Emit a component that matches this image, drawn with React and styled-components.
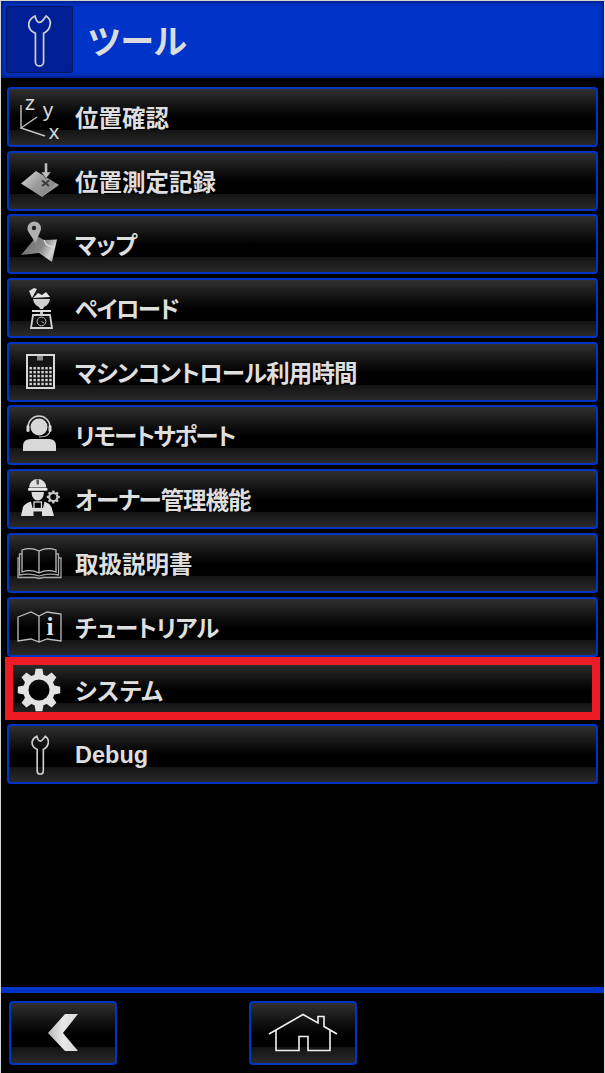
import styled, { createGlobalStyle } from 'styled-components'

const GlobalStyle = createGlobalStyle`
  html, body {
    margin: 0;
    padding: 0;
    background: #d4d4d4;
  }
`;

const gearPath = (cx, cy, outer, inner, hole, teeth) => {
  let d = '';
  const step = (Math.PI * 2) / teeth;
  for (let i = 0; i < teeth; i++) {
    const a = i * step - Math.PI / 2;
    const pts = [
      [inner, a - step * 0.36],
      [outer, a - step * 0.2],
      [outer, a + step * 0.2],
      [inner, a + step * 0.36],
    ];
    pts.forEach(([r, t], j) => {
      const x = (cx + r * Math.cos(t)).toFixed(2);
      const y = (cy + r * Math.sin(t)).toFixed(2);
      d += `${i === 0 && j === 0 ? 'M' : 'L'}${x} ${y} `;
    });
  }
  d += `Z M${cx + hole} ${cy} A${hole} ${hole} 0 1 0 ${cx - hole} ${cy} A${hole} ${hole} 0 1 0 ${cx + hole} ${cy} Z`;
  return d;
};

const WRENCH = 'M8 49 V21 C3.5 19 1 15 1.5 11 C2 8 4 6 7.5 4 L9 8 Q12 12.5 15.5 8 L18.5 4 C21.5 6 23 9 22.5 12 C22 16 19.5 19.5 16 21 V49 A4 4 0 0 1 8 49 Z';

const Svg = ({ children }) => (
  <svg width="54" height="54" viewBox="0 0 54 54">{children}</svg>
);

const AxesIcon = () => (
  <Svg>
    <path d="M8 15 V38 L24 27 M8 38 L32 46" fill="none" stroke="#c4c4c4" strokeWidth="1.4" />
    <g fill="#d8d8d8" fontFamily="Liberation Sans, sans-serif" fontSize="21" textAnchor="middle">
      <text x="17" y="20">z</text>
      <text x="35" y="27">y</text>
      <text x="41" y="49">x</text>
    </g>
  </Svg>
);

const SurveyIcon = () => (
  <Svg>
    <defs>
      <linearGradient id="survey" x1="0" y1="0.2" x2="1" y2="0.8">
        <stop offset="0" stopColor="#d4d4d4" />
        <stop offset="0.45" stopColor="#9a9a9a" />
        <stop offset="0.75" stopColor="#8c8c8c" />
        <stop offset="1" stopColor="#c0c0c0" />
      </linearGradient>
    </defs>
    <polygon points="8,29.5 23,17 46,31 29,43" fill="url(#survey)" />
    <polygon points="31.5,9 34.5,9 34.5,18 38,18 33,24.5 28,18 31.5,18" fill="#bdbdbd" stroke="#222" strokeWidth="0.5" />
    <path d="M29 26.5 L36 32 M36 26.5 L29 32" stroke="#3a3a3a" strokeWidth="1.8" />
  </Svg>
);

const MapIcon = () => (
  <Svg>
    <defs>
      <linearGradient id="mapfill" x1="0" y1="0.3" x2="1" y2="0.7">
        <stop offset="0" stopColor="#6c6c6c" />
        <stop offset="0.55" stopColor="#8a8a8a" />
        <stop offset="0.85" stopColor="#d6d6d6" />
        <stop offset="1" stopColor="#9a9a9a" />
      </linearGradient>
    </defs>
    <polygon points="8,38 18,26 24,19 31,23 44,22.5 39,45 26,36" fill="url(#mapfill)" />
    <path d="M31 23 Q33 30 42 30" fill="none" stroke="#e0e0e0" strokeWidth="1.2" />
    <path d="M22.5 26 L15.5 15 A6.8 6.8 0 1 1 27 15 Z" fill="#b0b0b0" />
    <circle cx="21" cy="11" r="2.2" fill="#222" />
  </Svg>
);

const PayloadIcon = () => (
  <Svg>
    <polygon points="16,10 21,7 24,8 19,17" fill="#dcdcdc" />
    <path d="M20 17 L25 12 L29 14 L33 11 L37 16 Z" fill="#e6e6e6" />
    <path d="M20 18 H37 Q36 24 31 26 L30 28 H27 L26 26 Q21 24 20 18 Z" fill="#d0d0d0" />
    <rect x="19" y="29" width="19" height="2" fill="#e0e0e0" />
    <rect x="27" y="31" width="3" height="3" fill="#c0c0c0" />
    <path d="M20 34 H37 L39 47 H18 Z" fill="#111" stroke="#d4d4d4" strokeWidth="1.8" />
    <circle cx="28.5" cy="40.5" r="4.4" fill="none" stroke="#b8b8b8" strokeWidth="1" />
    <path d="M28.5 40.5 L31 42" stroke="#b8b8b8" strokeWidth="1" />
  </Svg>
);

const CalendarIcon = () => {
  const dots = [];
  for (let row = 0; row < 5; row++) {
    for (let col = 0; col < 6; col++) {
      dots.push(<rect key={`${row}-${col}`} x={16.5 + col * 3.95} y={22 + row * 3.95} width="2.4" height="2.4" fill="#d8d8d8" />);
    }
  }
  return (
    <Svg>
      <rect x="14" y="10" width="27" height="33" fill="#151515" stroke="#d8d8d8" strokeWidth="2" />
      <rect x="24" y="11" width="6" height="4.5" fill="#888" />
      {dots}
    </Svg>
  );
};

const SupportIcon = () => (
  <Svg>
    <circle cx="26" cy="19" r="8.5" fill="#d8d8d8" />
    <path d="M15 22 V19 A11 11 0 0 1 37 19 V22" fill="none" stroke="#d0d0d0" strokeWidth="1.5" />
    <path d="M37 23 Q36 29 26 29" fill="none" stroke="#d0d0d0" strokeWidth="1.2" />
    <rect x="13.5" y="17" width="3" height="7" rx="1.5" fill="#d8d8d8" />
    <rect x="35.5" y="17" width="3" height="7" rx="1.5" fill="#d8d8d8" />
    <path d="M10 43 V38 Q10 31 18 31 H36 Q43 31 43 38 V43 Z" fill="#d8d8d8" />
  </Svg>
);

const OwnerIcon = () => (
  <Svg>
    <path d="M16 15.5 A8.7 8.5 0 0 1 33.4 15.5 Z" fill="#e0e0e0" />
    <rect x="23.5" y="7.5" width="2.4" height="5" fill="#555" />
    <rect x="15" y="16" width="19.5" height="2.8" rx="1" fill="#e8e8e8" />
    <path d="M18.5 20 H31 Q30.5 28.5 24.7 28.5 Q19 28.5 18.5 20 Z" fill="#dcdcdc" />
    <path d="M8 44 L10 35 Q12 31 18 29.5 L19.5 36 H30 L31.5 29.5 Q36 31 38.5 35 L41 44 H29 V39.5 H20.5 V44 Z" fill="#dedede" />
    <rect x="21" y="30" width="7.5" height="6.5" fill="none" stroke="#d8d8d8" strokeWidth="1.3" />
    <path d={gearPath(40.3, 25, 6.6, 5, 3, 8)} fill="#c8c8c8" fillRule="evenodd" />
  </Svg>
);

const BookIcon = () => (
  <Svg>
    <g fill="none" stroke="#aaa" strokeWidth="1.3">
      <path d="M26 37 Q18 33 9 36 V14 Q18 11 26 15 Q34 11 43 14 V36 Q34 33 26 37 Z" stroke="#bdbdbd" />
      <path d="M26 15 V37" stroke="#bdbdbd" />
      <path d="M9 18 H6.5 V39 Q17 37 26 40 Q35 37 45.5 39 V18 H43" />
      <path d="M6.5 22 H5 V41.5 H22 L26 42.5 L30 41.5 H48 V22 H45.5" />
    </g>
  </Svg>
);

const GuideIcon = () => (
  <Svg>
    <path d="M5 17 L18 12 L26 16 L34 12 L48 14 V41 L34 39 L26 42 L18 39 L5 41 Z M26 16 V42" fill="none" stroke="#bdbdbd" strokeWidth="1.3" />
    <text x="37" y="35" fill="#e4e4e4" fontFamily="Liberation Serif, serif" fontSize="25" fontWeight="700" textAnchor="middle">i</text>
  </Svg>
);

const GearIcon = () => (
  <Svg>
    <path d={gearPath(26, 27, 21.5, 16, 10.5, 8)} fill="#e2e2e2" fillRule="evenodd" />
  </Svg>
);

const DebugIcon = () => (
  <WrenchSvg width="18.5" height="42" viewBox="0 0 24 54" strokeWidth="2.1" />
);

const items = [
  { label: '位置確認', Icon: AxesIcon },
  { label: '位置測定記録', Icon: SurveyIcon },
  { label: 'マップ', Icon: MapIcon, tracking: -0.7 },
  { label: 'ペイロード', Icon: PayloadIcon, tracking: -1.7 },
  { label: 'マシンコントロール利用時間', Icon: CalendarIcon, tracking: -0.85 },
  { label: 'リモートサポート', Icon: SupportIcon, tracking: -1.6 },
  { label: 'オーナー管理機能', Icon: OwnerIcon, tracking: -1 },
  { label: '取扱説明書', Icon: BookIcon },
  { label: 'チュートリアル', Icon: GuideIcon, tracking: -0.85 },
  { label: 'システム', Icon: GearIcon, tracking: 0.5, selected: true },
  { label: 'Debug', Icon: DebugIcon, latin: true },
];

function WrenchSvg({ width, height, viewBox, strokeWidth }) {
  return (
    <svg width={width} height={height} viewBox={viewBox}>
      <path d={WRENCH} fill="none" stroke="#cfcfcf" strokeWidth={strokeWidth} />
    </svg>
  );
}

const App = () => {
  return (
    <Screen>
      <GlobalStyle />
      <Header>
        <HeaderIcon>
          <WrenchSvg width="25" height="55" viewBox="0 0 24 54" strokeWidth="1.7" />
        </HeaderIcon>
        <Title>ツール</Title>
      </Header>
      <Menu>
        {items.map(({ label, Icon, tracking = 0, selected, latin }) => (
          <Row key={label} $selected={selected}>
            <IconSlot><Icon /></IconSlot>
            <Label $tracking={tracking} $latin={latin}>{label}</Label>
          </Row>
        ))}
      </Menu>
      <Footer>
        <FooterButton>
          <svg width="32" height="40" viewBox="0 0 32 40">
            <defs>
              <linearGradient id="chev" x1="0" y1="0" x2="1" y2="0">
                <stop offset="0" stopColor="#b8b8b8" />
                <stop offset="0.5" stopColor="#e8e8e8" />
                <stop offset="1" stopColor="#d8d8d8" />
              </linearGradient>
            </defs>
            <polygon points="1,20 18,1 31,1 16,20 31,38 18,38" fill="url(#chev)" />
          </svg>
        </FooterButton>
        <FooterButton>
          <svg width="70" height="40" viewBox="0 0 70 40">
            <path
              d="M1 21 L35 1.5 L50 10 V3.5 H56 V13.5 L69 21 M8 17.5 V37.5 H31 V23.5 H40 V37.5 H62 V17.5"
              fill="none"
              stroke="#f2f2f2"
              strokeWidth="1.6"
            />
          </svg>
        </FooterButton>
      </Footer>
    </Screen>
  );
};

export default App;

const Screen = styled.div`
  display: flex;
  flex-direction: column;
  box-sizing: border-box;
  height: 1073px;
  margin: 0 1px;
  padding-top: 1px;
  overflow: hidden;
  font-family: "Liberation Sans", "Noto Sans CJK JP", sans-serif;
  font-feature-settings: "palt";
`;

const Header = styled.div`
  display: flex;
  align-items: center;
  flex-shrink: 0;
  box-sizing: border-box;
  height: 77px;
  padding-left: 5px;
  gap: 15px;
  background: #0033c8;
  box-shadow: inset 0 0 4px 1px #00186a;
`;

const HeaderIcon = styled.div`
  display: flex;
  align-items: center;
  justify-content: center;
  box-sizing: border-box;
  width: 67px;
  height: 67px;
  background: #001f94;
  border: 1px solid #00175e;
  border-radius: 2px;
`;

const Title = styled.span`
  color: #dcdcdc;
  font-size: 34px;
  font-weight: 700;
`;

const Menu = styled.div`
  display: flex;
  flex-direction: column;
  flex: 1;
  gap: 3.7px;
  padding: 9px 6px 0;
  background: #000;
`;

const barGradient = `linear-gradient(
  to bottom,
  #303030 0%,
  #0c0c0c 38%,
  #000 52%,
  #000 74%,
  #141414 74%,
  #2a2a2a 100%
)`;

const Row = styled.div`
  position: relative;
  display: flex;
  align-items: center;
  box-sizing: border-box;
  height: 60px;
  padding-left: 4px;
  gap: 8px;
  background: ${barGradient};
  border: 2px solid #0033c8;
  border-radius: 4px;

  ${({ $selected }) => $selected && `
    &::after {
      content: "";
      position: absolute;
      top: -5px;
      left: -4px;
      right: -4px;
      bottom: -2px;
      border: 8px solid #ed1c24;
    }
  `}
`;

const IconSlot = styled.div`
  display: flex;
  align-items: center;
  justify-content: center;
  width: 54px;
  height: 54px;
  flex-shrink: 0;
`;

const Label = styled.span`
  color: #dedede;
  font-size: 23.5px;
  font-weight: 700;
  letter-spacing: ${({ $tracking }) => $tracking}px;
  padding-top: ${({ $latin }) => ($latin ? 3 : 0)}px;
`;

const Footer = styled.div`
  display: flex;
  flex-shrink: 0;
  box-sizing: border-box;
  height: 86px;
  padding: 8px 0 0 8px;
  gap: 132px;
  background: #000;
  border-top: 6px solid #0033c8;
`;

const FooterButton = styled.div`
  display: flex;
  align-items: center;
  justify-content: center;
  box-sizing: border-box;
  width: 108px;
  height: 64px;
  background: ${barGradient};
  border: 2px solid #0033c8;
  border-radius: 4px;
`;
